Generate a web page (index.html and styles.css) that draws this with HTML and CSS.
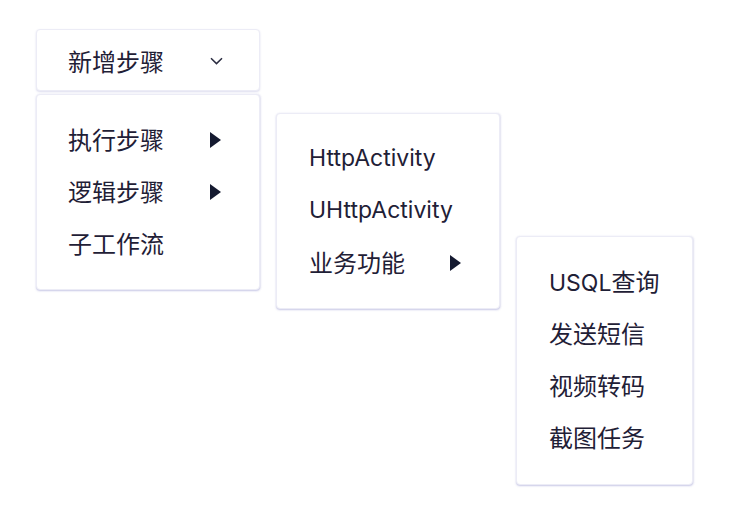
FILE: index.html
```html
<!DOCTYPE html>
<html lang="zh">
<head>
<meta charset="utf-8">
<link rel="stylesheet" href="styles.css">
</head>
<body>
<div class="stage">
  <div class="dropdown">
    <div class="trigger">
      <span>新增步骤</span>
      <svg class="chevron" width="13" height="8" viewBox="0 0 13 8"><path d="M1 1.2 L6.5 6.6 L12 1.2" fill="none" stroke="#2a2c40" stroke-width="1.5"/></svg>
    </div>
    <ul class="menu menu-main">
      <li class="item has-sub">
        <span>执行步骤</span><span class="tri"></span>
        <ul class="menu sub sub-1">
          <li class="item"><span class="latin">HttpActivity</span></li>
          <li class="item"><span class="latin">UHttpActivity</span></li>
          <li class="item has-sub">
            <span>业务功能</span><span class="tri"></span>
            <ul class="menu sub sub-2">
              <li class="item"><span><span class="latin">USQL</span>查询</span></li>
              <li class="item"><span>发送短信</span></li>
              <li class="item"><span>视频转码</span></li>
              <li class="item"><span>截图任务</span></li>
            </ul>
          </li>
        </ul>
      </li>
      <li class="item has-sub"><span>逻辑步骤</span><span class="tri"></span></li>
      <li class="item"><span>子工作流</span></li>
    </ul>
  </div>
</div>
</body>
</html>
```
FILE: styles.css
```css
* { box-sizing: border-box; }
html, body { margin: 0; background: #ffffff; }
body {
  font-family: "Inter", "Noto Sans CJK SC", sans-serif;
  font-size: 24px;
  color: #1f2036;
}
.latin { font-size: 23px; }
.stage { padding: 29px 0 0 36px; height: 530px; }
.dropdown { width: 224px; }
.trigger {
  height: 62px;
  display: flex;
  align-items: center;
  justify-content: space-between;
  padding: 0 36px 0 31px;
  background: #fff;
  border: 1px solid #ececf6;
  border-radius: 4px;
  box-shadow: 0 1px 2px rgba(120, 120, 190, 0.25);
}
.chevron { display: block; margin-top: 1px; }
.menu {
  list-style: none;
  margin: 0;
  padding: 19px 0;
  background: #fff;
  border: 1px solid #ececf6;
  border-radius: 4px;
  box-shadow: 0 1px 2px rgba(110, 110, 190, 0.35), 1px 0 2px rgba(120, 120, 190, 0.12);
}
.menu-main { margin-top: 3px; width: 224px; }
.item {
  position: relative;
  height: 52px;
  display: flex;
  align-items: center;
  justify-content: space-between;
  padding: 0 38px 3px 31px;
  white-space: nowrap;
}
.sub .item { padding-left: 32px; }
.tri {
  width: 0;
  height: 0;
  margin-top: 3px;
  border-top: 8px solid transparent;
  border-bottom: 8px solid transparent;
  border-left: 11px solid #151a30;
}
.sub { position: absolute; top: -1px; }
.sub-1 { left: calc(100% + 17px); width: 224px; }
.sub-2 { left: calc(100% + 17px); width: 177px; }
.sub-2 { padding-bottom: 20px; }
```
